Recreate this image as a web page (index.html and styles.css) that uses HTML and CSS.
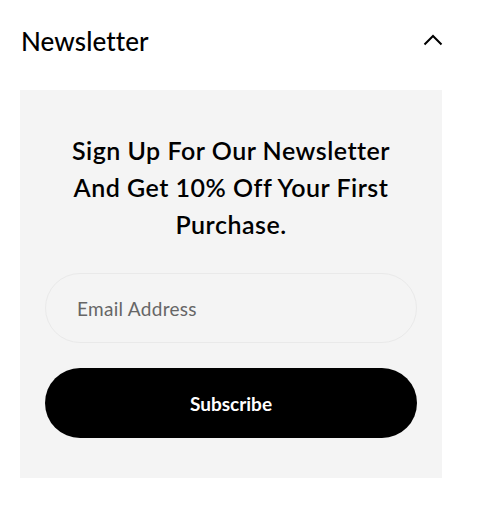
FILE: index.html
```html
<!DOCTYPE html>
<html lang="en">
<head>
<meta charset="utf-8">
<link rel="stylesheet" href="styles.css">
</head>
<body>
<section class="newsletter">
  <div class="nl-header">
    <h2 class="nl-title">Newsletter</h2>
    <svg class="nl-chevron" width="20" height="12" viewBox="0 0 20 12" aria-hidden="true">
      <path d="M1.5 10.5 L10 2 L18.5 10.5" fill="none" stroke="#000" stroke-width="2"/>
    </svg>
  </div>
  <div class="nl-panel">
    <p class="nl-lead">Sign Up For Our Newsletter And Get 10% Off Your First Purchase.</p>
    <form class="nl-form">
      <input class="nl-input" type="email" placeholder="Email Address">
      <button class="nl-button" type="button">Subscribe</button>
    </form>
  </div>
</section>
</body>
</html>
```
FILE: styles.css
```css
* { box-sizing: border-box; }
html, body { margin: 0; background: #fff; }
body {
  font-family: Lato, "Noto Sans", sans-serif;
  color: #000;
}
.newsletter {
  width: 422px;
  margin-left: 20px;
  padding-top: 22px;
}
.nl-header {
  display: flex;
  justify-content: space-between;
  align-items: center;
  height: 38px;
  margin-bottom: 30px;
}
.nl-title {
  margin: 0 0 0 1px;
  font-size: 26px;
  font-weight: 500;
  letter-spacing: 0.1px;
}
.nl-chevron { margin-right: -1px; margin-top: -2px; }
.nl-panel {
  background: #f4f4f4;
  padding: 42px 25px 40px;
}
.nl-lead {
  margin: 0 0 30px;
  text-align: center;
  font-size: 25px;
  line-height: 37px;
  font-weight: 600;
  letter-spacing: 0.5px;
  padding: 0 10px;
}
.nl-form {
  display: flex;
  flex-direction: column;
  gap: 25px;
}
.nl-input {
  height: 70px;
  border: 1px solid #e9e9e9;
  border-radius: 35px;
  background: #f4f4f4;
  padding: 0 31px;
  font-family: inherit;
  font-size: 19px;
  letter-spacing: 0.3px;
  color: #333;
  outline: none;
}
.nl-input::placeholder { color: #666; }
.nl-button {
  height: 70px;
  border: 0;
  border-radius: 35px;
  background: #000;
  color: #fff;
  font-family: inherit;
  font-size: 19px;
  font-weight: 700;
}
```
